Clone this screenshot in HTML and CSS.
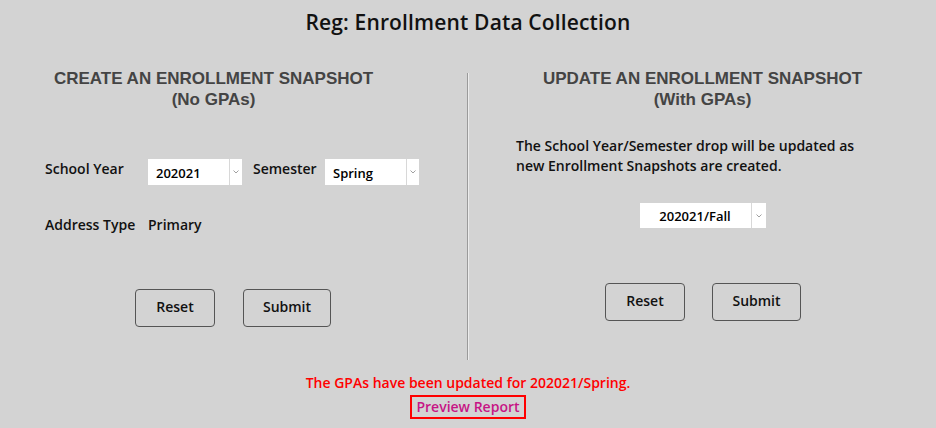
FILE: index.html
```html
<!DOCTYPE html>
<html lang="en">
<head>
<meta charset="utf-8">
<title>Reg: Enrollment Data Collection</title>
<link rel="stylesheet" href="styles.css">
</head>
<body>
<h1 class="title">Reg: Enrollment Data Collection</h1>
<div class="panels">
  <section class="panel panel-left">
    <h2 class="panel-heading heading-left">CREATE AN ENROLLMENT SNAPSHOT<br>(No GPAs)</h2>
    <div class="form-row row-year">
      <span class="label label-wide">School Year</span>
      <div class="select select-small">
        <span class="select-value">202021</span>
        <span class="select-arrow"><svg width="6" height="4" viewBox="0 0 6 4"><path d="M0.5 0.5 L3 3 L5.5 0.5" fill="none" stroke="#a0a0a0" stroke-width="1"/></svg></span>
      </div>
      <span class="label label-sem">Semester</span>
      <div class="select select-small">
        <span class="select-value">Spring</span>
        <span class="select-arrow"><svg width="6" height="4" viewBox="0 0 6 4"><path d="M0.5 0.5 L3 3 L5.5 0.5" fill="none" stroke="#a0a0a0" stroke-width="1"/></svg></span>
      </div>
    </div>
    <div class="form-row row-address">
      <span class="label label-wide">Address Type</span>
      <span class="label">Primary</span>
    </div>
    <div class="buttons buttons-left">
      <button class="btn btn-reset">Reset</button>
      <button class="btn btn-submit">Submit</button>
    </div>
  </section>
  <div class="divider"></div>
  <section class="panel panel-right">
    <h2 class="panel-heading">UPDATE AN ENROLLMENT SNAPSHOT<br>(With GPAs)</h2>
    <p class="note">The School Year/Semester drop will be updated as<br>new Enrollment Snapshots are created.</p>
    <div class="select select-term">
      <span class="select-value select-center">202021/Fall</span>
      <span class="select-arrow arrow-wide"><svg width="6" height="4" viewBox="0 0 6 4"><path d="M0.5 0.5 L3 3 L5.5 0.5" fill="none" stroke="#a0a0a0" stroke-width="1"/></svg></span>
    </div>
    <div class="buttons buttons-right">
      <button class="btn btn-reset">Reset</button>
      <button class="btn btn-submit">Submit</button>
    </div>
  </section>
</div>
<p class="message">The GPAs have been updated for 202021/Spring.</p>
<div class="preview-wrap"><a class="preview" href="#">Preview Report</a></div>
</body>
</html>
```
FILE: styles.css
```css
* { box-sizing: border-box; }
html, body { margin: 0; padding: 0; }
body {
  width: 936px;
  height: 428px;
  overflow: hidden;
  background: #d3d3d3;
  font-family: "Open Sans", Lato, sans-serif;
  color: #111;
}
.title {
  margin: 0;
  padding-top: 9px;
  height: 68px;
  text-align: center;
  font-size: 21px;
  line-height: 26px;
  font-weight: 600;
  letter-spacing: 0.15px;
  color: #111;
}
.panels {
  display: flex;
  height: 292px;
}
.panel { display: flex; flex-direction: column; }
.panel-left { width: 467px; }
.panel-right { flex: 1; }
.divider {
  margin-top: 5px;
  width: 2px;
  height: 287px;
  border-left: 1px solid #9a9a9a;
  background: #ececec;
}
.panel-heading {
  margin: 0;
  text-align: center;
  font-family: "Liberation Sans", Arial, sans-serif;
  font-size: 17px;
  line-height: 21px;
  font-weight: bold;
  color: #444;
}
.heading-left { margin-right: 40px; }
.form-row {
  display: flex;
  align-items: flex-start;
  padding-left: 45px;
}
.row-year { margin-top: 49px; }
.row-address { margin-top: 30px; }
.label {
  font-size: 14px;
  line-height: 20px;
  font-weight: 600;
  color: #111;
}
.label-wide { width: 103px; }
.label-sem { margin-left: 11px; width: 72px; }
.select {
  display: flex;
  background: #fff;
  height: 26px;
}
.select-small { width: 94px; }
.select-value {
  flex: 1;
  padding-left: 8px;
  font-size: 13px;
  line-height: 28px;
  font-weight: 600;
  color: #000;
}
.select-center { padding-left: 0; text-align: center; }
.select-arrow {
  width: 13px;
  border-left: 1px solid #d8d8d8;
  display: flex;
  align-items: center;
  justify-content: center;
}
.arrow-wide { width: 15px; }
.buttons { display: flex; gap: 28px; }
.buttons-left { margin-top: 54px; padding-left: 135px; }
.buttons-right { margin-top: 55px; padding-left: 136px; gap: 27px; }
.btn {
  height: 38px;
  background: transparent;
  border: 1px solid #555;
  border-radius: 4px;
  font-family: "Open Sans", Lato, sans-serif;
  font-size: 14px;
  line-height: 18px;
  font-weight: 600;
  color: #111;
  padding: 0 0 2px;
}
.btn-reset { width: 80px; }
.btn-submit { width: 88px; }
.buttons-right .btn-submit { width: 89px; }
.note {
  margin: 26px 0 0 47px;
  font-size: 14px;
  line-height: 20px;
  font-weight: 600;
  color: #111;
}
.select-term {
  margin: 27px auto 0;
  width: 126px;
  height: 25px;
}
.select-term .select-value { line-height: 26px; }
.message {
  margin: 13px 0 0;
  text-align: center;
  font-size: 14px;
  line-height: 20px;
  font-weight: 600;
  color: #ff0000;
}
.preview-wrap {
  margin-top: 2px;
  text-align: center;
}
.preview {
  display: inline-block;
  border: 2px solid #ff0000;
  padding: 0 4px;
  font-size: 14px;
  line-height: 20px;
  font-weight: 600;
  color: #c71585;
  text-decoration: none;
}
```
